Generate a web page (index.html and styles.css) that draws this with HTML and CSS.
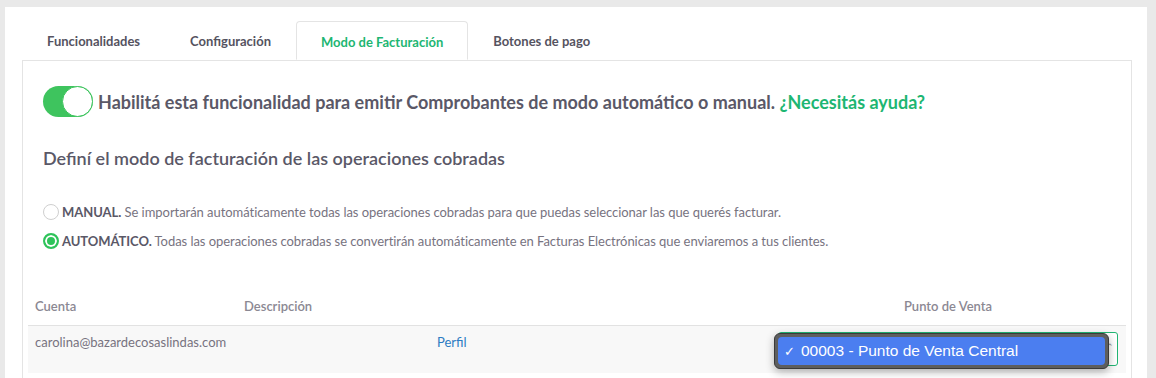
FILE: index.html
```html
<!DOCTYPE html>
<html lang="es">
<head>
    <meta charset="UTF-8">
    <meta name="viewport" content="width=device-width, initial-scale=1.0">
    <title>Modo de Facturación</title>
    <link rel="stylesheet" href="styles.css">
</head>
<body>
    <div class="card">
        <!-- Pestañas -->
        <div class="tabs">
            <div class="tab">Funcionalidades</div>
            <div class="tab">Configuración</div>
            <div class="tab active">Modo de Facturación</div>
            <div class="tab">Botones de pago</div>
        </div>

        <div class="panel">
            <div class="enable-row">
                <span class="switch"><span class="knob"></span></span>
                <span class="enable-text">Habilitá esta funcionalidad para emitir Comprobantes de modo automático o manual. <a class="help" href="#">¿Necesitás ayuda?</a></span>
            </div>

            <h2>Definí el modo de facturación de las operaciones cobradas</h2>

            <div class="options">
                <label class="option">
                    <span class="radio"></span>
                    <span><b>MANUAL.</b> Se importarán automáticamente todas las operaciones cobradas para que puedas seleccionar las que querés facturar.</span>
                </label>
                <label class="option">
                    <span class="radio checked"></span>
                    <span><b>AUTOMÁTICO.</b> Todas las operaciones cobradas se convertirán automáticamente en Facturas Electrónicas que enviaremos a tus clientes.</span>
                </label>
            </div>

            <table class="accounts">
                <thead>
                    <tr>
                        <th class="col-account">Cuenta</th>
                        <th class="col-desc">Descripción</th>
                        <th class="col-link"></th>
                        <th class="col-pos">Punto de Venta</th>
                    </tr>
                </thead>
                <tbody>
                    <tr>
                        <td>carolina@bazardecosaslindas.com</td>
                        <td></td>
                        <td><a class="profile" href="#">Perfil</a></td>
                        <td class="pos-cell">
                            <div class="select"><span class="arrow">⌃</span></div>
                            <!-- menú desplegado del select -->
                            <div class="popup">
                                <div class="popup-item"><span class="check">✓</span>00003 - Punto de Venta Central</div>
                            </div>
                        </td>
                    </tr>
                </tbody>
            </table>
        </div>
    </div>
</body>
</html>
```

FILE: styles.css
```css
body {
    margin: 0;
    padding: 7px 9px 0 5px;
    background-color: #e9e9e9;
    font-family: Lato, "Open Sans", sans-serif;
    color: #5a5867;
    overflow: hidden;
    height: 371px;
}
.card {
    background-color: white;
    padding: 14px 15px 0 17px;
    height: 357px;
}
.tabs {
    display: flex;
    height: 39px;
}
.tab {
    padding: 0 25px;
    font-size: 13px;
    font-weight: bold;
    color: #55535f;
    line-height: 40px;
}
.tab.active {
    color: #1db672;
    border: 1px solid #e4e4e4;
    border-bottom: 1px solid white;
    border-radius: 4px 4px 0 0;
    padding: 0 24px;
    background-color: white;
    position: relative;
    z-index: 1;
}
.panel {
    border: 1px solid #e4e4e4;
    border-bottom: none;
    padding: 25px 5px 0 5px;
    height: 292px;
}
.enable-row {
    display: flex;
    align-items: center;
    gap: 5px;
    padding-left: 15px;
}
.switch {
    width: 50px;
    height: 31px;
    border-radius: 16px;
    background-color: #3ec45e;
    position: relative;
    flex-shrink: 0;
}
.knob {
    position: absolute;
    right: 0;
    top: 0;
    width: 29px;
    height: 29px;
    border-radius: 50%;
    background-color: white;
    border: 1px solid #3ec45e;
}
.enable-text {
    font-size: 18px;
    font-weight: bold;
    color: #5a5867;
}
.help {
    color: #1db672;
    text-decoration: none;
}
h2 {
    margin: 30px 0 0 15px;
    font-size: 18px;
    font-weight: 600;
    color: #5a5867;
}
.options {
    margin: 35px 0 0 15px;
    display: flex;
    flex-direction: column;
    gap: 13px;
}
.option {
    display: flex;
    align-items: center;
    gap: 3px;
    font-size: 13px;
    color: #77737f;
    letter-spacing: -0.05px;
}
.option b {
    color: #5a5867;
}
.radio {
    width: 16px;
    height: 16px;
    border-radius: 50%;
    border: 1px solid #cfcfcf;
    box-sizing: border-box;
    flex-shrink: 0;
}
.radio.checked {
    border: 2px solid #2ec35a;
    box-shadow: inset 0 0 0 2px white;
    background-color: #2ec35a;
}
.accounts {
    width: 100%;
    border-collapse: collapse;
    margin-top: 37px;
    font-size: 13px;
}
.accounts th {
    text-align: left;
    color: #8b8893;
    font-weight: 600;
    height: 39px;
    padding: 0 7px;
    border-bottom: 1px solid #e2e2e2;
}
.accounts th.col-pos {
    text-align: center;
}
.col-account { width: 195px; }
.col-desc { width: 179px; }
.col-link { width: 326px; }
.accounts td {
    background-color: #f8f8f8;
    color: #77737f;
    padding: 8px 7px 0 7px;
    height: 39px;
    vertical-align: top;
}
.profile {
    color: #2d7cc3;
    text-decoration: none;
}
.pos-cell {
    position: relative;
}
.select {
    margin: -2px 0 0 1px;
    width: 338px;
    height: 32px;
    border: 1px solid #22b573;
    border-radius: 3px;
    background-color: white;
    position: relative;
}
.arrow {
    position: absolute;
    right: 3px;
    top: 8px;
    font-size: 9px;
    color: #888;
}
.popup {
    position: absolute;
    left: 4px;
    top: 7px;
    width: 327px;
    padding: 3px;
    background-color: #5e5e5e;
    border: 1px solid #3a3a3a;
    border-radius: 6px;
    box-shadow: 0 3px 8px rgba(0, 0, 0, 0.3);
}
.popup-item {
    height: 28px;
    background-color: #4b7ef0;
    border-radius: 4px;
    color: white;
    font-family: "Liberation Sans", Arial, sans-serif;
    font-size: 15.5px;
    line-height: 28px;
    padding-left: 6px;
}
.check {
    display: inline-block;
    width: 17px;
    font-size: 13px;
}
```
